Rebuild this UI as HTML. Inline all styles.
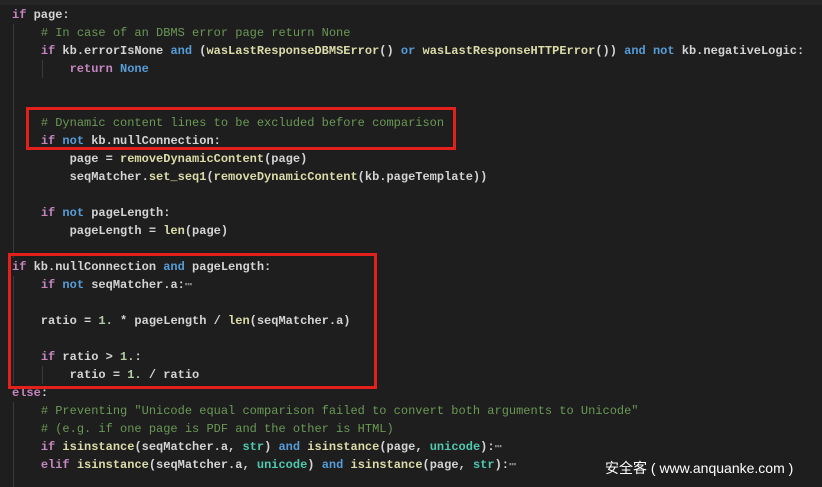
<!DOCTYPE html>
<html><head><meta charset="utf-8"><style>
body{margin:0;width:822px;height:487px;background:#1e1e1e;overflow:hidden;position:relative}
pre{margin:0;position:absolute;left:12px;top:6px;font:12px/18px "Liberation Mono",monospace;color:#d4d4d4;font-weight:bold}
.k{color:#c586c0}.b{color:#569cd6}.c{color:#6a9955;font-weight:normal}.f{color:#dcdcaa}.n{color:#b5cea8}.t{color:#4ec9b0}.g{color:#888}
.box{position:absolute;border:3px solid #e3201b}
.guide{position:absolute;width:1px;background:#3a3a3a}
.wm{position:absolute;left:605px;top:458px;color:#fff;font:14px "Liberation Sans","Noto Sans CJK SC",sans-serif}
.top{position:absolute;left:0;top:0;width:822px;height:5px;background:#252526}
</style></head><body>
<div class="top"></div>
<div class="guide" style="left:13px;top:24px;height:234px"></div>
<div class="guide" style="left:42px;top:60px;height:18px"></div>
<div class="guide" style="left:13px;top:276px;height:108px"></div>
<div class="guide" style="left:42px;top:366px;height:18px"></div>
<div class="guide" style="left:13px;top:402px;height:85px"></div>
<pre><span class="k">if</span> page:
    <span class="c"># In case of an DBMS error page return None</span>
    <span class="k">if</span> kb.errorIsNone <span class="b">and</span> (<span class="f">wasLastResponseDBMSError</span>() <span class="b">or</span> <span class="f">wasLastResponseHTTPError</span>()) <span class="b">and</span> <span class="b">not</span> kb.negativeLogic:
        <span class="k">return</span> <span class="b">None</span>


    <span class="c"># Dynamic content lines to be excluded before comparison</span>
    <span class="k">if</span> <span class="b">not</span> kb.nullConnection:
        page = <span class="f">removeDynamicContent</span>(page)
        seqMatcher.<span class="f">set_seq1</span>(<span class="f">removeDynamicContent</span>(kb.pageTemplate))

    <span class="k">if</span> <span class="b">not</span> pageLength:
        pageLength = <span class="f">len</span>(page)

<span class="k">if</span> kb.nullConnection <span class="b">and</span> pageLength:
    <span class="k">if</span> <span class="b">not</span> seqMatcher.a:<span class="g">⋯</span>

    ratio = <span class="n">1.</span> * pageLength / <span class="f">len</span>(seqMatcher.a)

    <span class="k">if</span> ratio &gt; <span class="n">1.</span>:
        ratio = <span class="n">1.</span> / ratio
<span class="k">else</span>:
    <span class="c"># Preventing "Unicode equal comparison failed to convert both arguments to Unicode"</span>
    <span class="c"># (e.g. if one page is PDF and the other is HTML)</span>
    <span class="k">if</span> <span class="f">isinstance</span>(seqMatcher.a, <span class="t">str</span>) <span class="b">and</span> <span class="f">isinstance</span>(page, <span class="t">unicode</span>):<span class="g">⋯</span>
    <span class="k">elif</span> <span class="f">isinstance</span>(seqMatcher.a, <span class="t">unicode</span>) <span class="b">and</span> <span class="f">isinstance</span>(page, <span class="t">str</span>):<span class="g">⋯</span></pre>
<div class="box" style="left:26px;top:107px;width:424px;height:37px"></div>
<div class="box" style="left:8px;top:253px;width:363px;height:130px"></div>
<div class="wm">安全客 ( www.anquanke.com )</div>
</body></html>
